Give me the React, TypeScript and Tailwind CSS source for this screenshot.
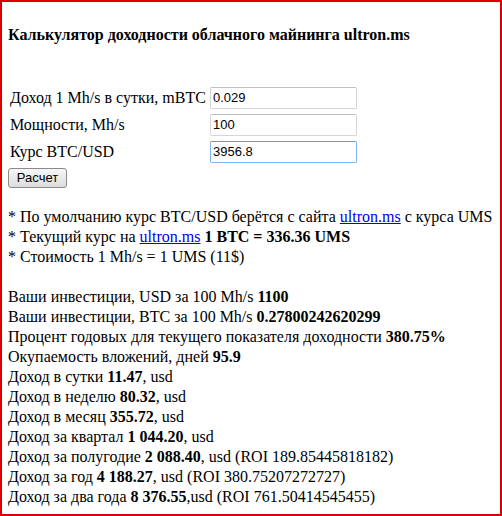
const FIELDS = [
  { label: 'Доход 1 Mh/s в сутки, mBTC', value: '0.029', focus: false },
  { label: 'Мощности, Mh/s', value: '100', focus: false },
  { label: 'Курс BTC/USD', value: '3956.8', focus: true },
]

const RESULTS: { pre: string; bold: string; post?: string }[] = [
  { pre: 'Ваши инвестиции, USD за 100 Mh/s ', bold: '1100' },
  { pre: 'Ваши инвестиции, BTC за 100 Mh/s ', bold: '0.27800242620299' },
  { pre: 'Процент годовых для текущего показателя доходности ', bold: '380.75%' },
  { pre: 'Окупаемость вложений, дней ', bold: '95.9' },
  { pre: 'Доход в сутки ', bold: '11.47', post: ', usd' },
  { pre: 'Доход в неделю ', bold: '80.32', post: ', usd' },
  { pre: 'Доход в месяц ', bold: '355.72', post: ', usd' },
  { pre: 'Доход за квартал ', bold: '1 044.20', post: ', usd' },
  { pre: 'Доход за полугодие ', bold: '2 088.40', post: ', usd (ROI 189.85445818182)' },
  { pre: 'Доход за год ', bold: '4 188.27', post: ', usd (ROI 380.75207272727)' },
  { pre: 'Доход за два года ', bold: '8 376.55', post: ',usd (ROI 761.50414545455)' },
]

export default function App() {
  return (
    <div className="w-[502px] h-[516px] border-2 border-[#dd0000] bg-white px-[6px] pt-[23px] text-black text-[16px] leading-[20px] font-['Liberation_Serif',serif] overflow-hidden">
      <h1 className="font-bold">Калькулятор доходности облачного майнинга ultron.ms</h1>

      {/* Form */}
      <div className="mt-[39px] flex flex-col">
        {FIELDS.map(f => (
          <div key={f.label} className="h-[27px] flex items-center">
            <span className="w-[202px] pl-[2px]">{f.label}</span>
            <input
              readOnly
              value={f.value}
              className={`w-[147px] h-[22px] px-[2px] rounded-[2px] border bg-white text-[13px] font-['Liberation_Sans',sans-serif] outline-none ${
                f.focus ? 'border-[#7eb4ea] border-t-[#569de5]' : 'border-[#d5d5d5] border-t-[#c0c0c0]'
              }`}
            />
          </div>
        ))}
      </div>

      <button className="mt-[3px] w-[59px] h-[20px] rounded-[3px] border border-[#8a8a8a] bg-gradient-to-b from-[#f6f6f6] to-[#dddddd] text-[13px] leading-[16px] font-['Liberation_Sans',sans-serif]">
        Расчет
      </button>

      {/* Notes */}
      <div className="mt-[19px]">
        <div>
          * По умолчанию курс BTC/USD берётся с сайта{' '}
          <a href="#" className="text-[#0000ee] underline">ultron.ms</a> с курса UMS
        </div>
        <div>
          * Текущий курс на <a href="#" className="text-[#0000ee] underline">ultron.ms</a>{' '}
          <b>1 BTC = 336.36 UMS</b>
        </div>
        <div>* Стоимость 1 Mh/s = 1 UMS (11$)</div>
      </div>

      {/* Results */}
      <div className="mt-[20px]">
        {RESULTS.map(r => (
          <div key={r.pre} className="whitespace-nowrap">
            {r.pre}
            <b>{r.bold}</b>
            {r.post}
          </div>
        ))}
      </div>
    </div>
  )
}
